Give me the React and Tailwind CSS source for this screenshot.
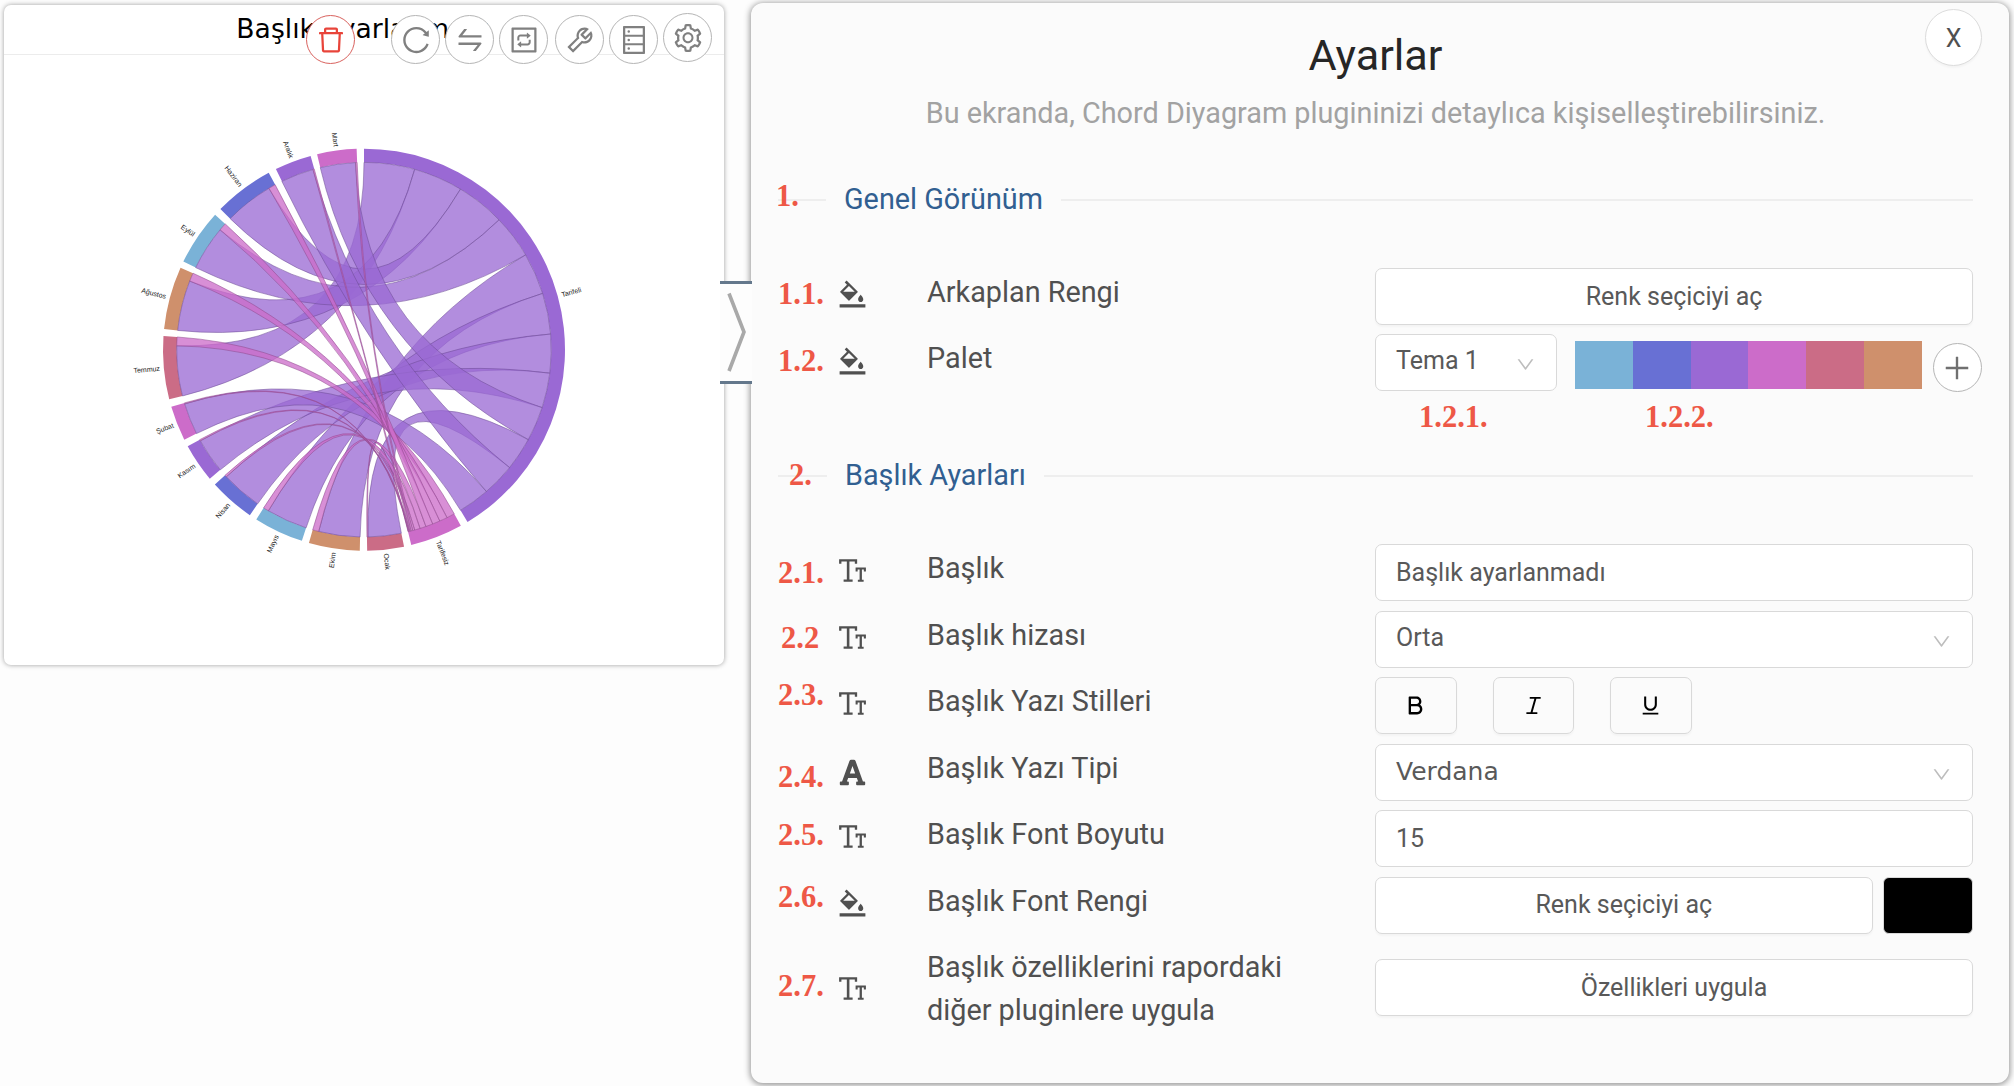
import React from "react";
import {
  AiOutlineDelete, AiOutlineReload, AiOutlineSwap, AiOutlineInteraction, AiOutlineTool,
  AiOutlineDatabase, AiOutlineSetting, AiOutlineBgColors, AiOutlineFontSize, AiOutlineDown,
  AiOutlinePlus, AiOutlineBold, AiOutlineItalic, AiOutlineUnderline,
} from "react-icons/ai";
import { FaFont } from "react-icons/fa";

const BLUE = "#7ab2d7", INDIGO = "#6870d4", PURPLE = "#9a69d4", PINK = "#cc6cc9", ROSE = "#cb6c86", ORANGE = "#cf906c";

/* name, colour, start, end (degrees clockwise from the top), split point between the two ribbons */
const MAIN = { name: "Tarifeli", color: PURPLE, a0: 0, a1: 149 };
const SECOND = { name: "Tarifesiz", color: PINK, a0: 151.2, a1: 166.4 };
const MONTHS = [
  { name: "Ocak", color: ROSE, a0: 168.5, split: 178.8, a1: 179.1, main: [118.7, 129], second: [166.25, 166.4] },
  { name: "Ekim", color: ORANGE, a0: 181.2, split: 194.0, a1: 195.9, main: [59.6, 72.5], second: [160.7, 162.6] },
  { name: "Mayıs", color: BLUE, a0: 198, split: 210.7, a1: 212.4, main: [72.5, 85.2], second: [162.6, 164.3] },
  { name: "Nisan", color: INDIGO, a0: 214.6, split: 227.3, a1: 227.9, main: [85.2, 97.2], second: [164.3, 164.9] },
  { name: "Kasım", color: PURPLE, a0: 230.1, split: 240.9, a1: 241.3, main: [97.2, 108], second: [165.75, 166.05] },
  { name: "Şubat", color: PINK, a0: 243.4, split: 253.2, a1: 253.5, main: [139.2, 149], second: [166.05, 166.25] },
  { name: "Temmuz", color: ROSE, a0: 255.7, split: 271.2, a1: 273.9, main: [0, 15.7], second: [151.2, 153.7] },
  { name: "Ağustos", color: ORANGE, a0: 275.9, split: 291.5, a1: 294.1, main: [15.7, 31], second: [153.7, 156.15] },
  { name: "Eylül", color: BLUE, a0: 296, split: 309.8, a1: 312.2, main: [46.1, 59.6], second: [156.15, 158.5] },
  { name: "Haziran", color: INDIGO, a0: 314.4, split: 329.5, a1: 331.7, main: [31, 46.1], second: [158.5, 160.7] },
  { name: "Aralık", color: PURPLE, a0: 334, split: 344.2, a1: 344.6, main: [129, 139.2], second: [165.4, 165.75] },
  { name: "Mart", color: PINK, a0: 346.5, split: 357.4, a1: 357.9, main: [108, 118.7], second: [164.9, 165.4] },
];

const R_OUT = 201, R_IN = 187.3;
const pt = (a, r) => {
  const t = ((a - 90) * Math.PI) / 180;
  return `${(r * Math.cos(t)).toFixed(2)},${(r * Math.sin(t)).toFixed(2)}`;
};
const band = (a0, a1) => {
  const big = a1 - a0 > 180 ? 1 : 0;
  return `M${pt(a0, R_OUT)}A${R_OUT},${R_OUT} 0 ${big} 1 ${pt(a1, R_OUT)}L${pt(a1, R_IN)}A${R_IN},${R_IN} 0 ${big} 0 ${pt(a0, R_IN)}Z`;
};
const ribbon = ([s0, s1], [t0, t1]) =>
  `M${pt(s0, R_IN)}A${R_IN},${R_IN} 0 0 1 ${pt(s1, R_IN)}Q0,0 ${pt(t0, R_IN)}A${R_IN},${R_IN} 0 0 1 ${pt(t1, R_IN)}Q0,0 ${pt(s0, R_IN)}Z`;

function ChordDiagram() {
  return (
    <svg className="block h-[609px] w-[720px]" viewBox="4 55 720 609">
      <g transform="translate(364 349.7)">
        {[MAIN, SECOND, ...MONTHS].map((g) => {
          const mid = (g.a0 + g.a1) / 2;
          const flip = mid > 180;
          return (
            <g key={g.name}>
              <path d={band(g.a0, g.a1)} fill={g.color} />
              <g transform={`rotate(${mid - 90}) translate(205 0)${flip ? " rotate(180)" : ""}`}>
                <text dy=".35em" textAnchor={flip ? "end" : "start"} className="fill-[#222] font-['Liberation_Sans',sans-serif] text-[7px]">{g.name}</text>
              </g>
            </g>
          );
        })}
        <g fillOpacity=".76" strokeOpacity=".7" strokeWidth=".75">
          {MONTHS.map((m) => (
            <path key={m.name} d={ribbon(m.main, [m.a0, m.split])} fill={PURPLE} stroke="#6c4a94" />
          ))}
          {MONTHS.map((m) => (
            <path key={m.name} d={ribbon(m.second, [m.split, m.a1])} fill={PINK} stroke="#8f4b8d" />
          ))}
        </g>
      </g>
    </svg>
  );
}

const TOOL = "flex size-[49px] shrink-0 items-center justify-center rounded-full border bg-white text-[32px] ";

function PreviewCard() {
  return (
    <section className="relative mt-[5px] ml-1 h-[660px] w-[720px] shrink-0 rounded-[7px] bg-white shadow-[0_0_5px_rgba(0,0,0,0.38)]">
      <h2 className="h-[50px] border-b-[1px] border-[#ececec] pr-[2px] text-center font-['DejaVu_Sans',sans-serif] text-[26.6px] leading-[48px] text-black">
        Başlık ayarlanmadı
      </h2>
      <div className="absolute top-2 left-[302px] flex items-start text-[#808080]">
        <button className={TOOL + "mt-[2px] mr-9 border-[#d9625e] text-[#e8443a]"}><AiOutlineDelete /></button>
        <button className={TOOL + "mt-[2px] mr-[5px] border-[#b5b5b5]"}><AiOutlineReload /></button>
        <button className={TOOL + "mt-[2px] mr-[5px] border-[#b5b5b5]"}><AiOutlineSwap /></button>
        <button className={TOOL + "mt-[2px] mr-[7px] border-[#b5b5b5]"}><AiOutlineInteraction /></button>
        <button className={TOOL + "mt-[2px] mr-[5px] border-[#b5b5b5]"}><AiOutlineTool /></button>
        <button className={TOOL + "mt-[2px] mr-[5px] border-[#b5b5b5]"}><AiOutlineDatabase /></button>
        <button className={TOOL + "border-[#b5b5b5]"}><AiOutlineSetting /></button>
      </div>
      <ChordDiagram />
    </section>
  );
}

function Mark({ className = "", children }) {
  return (
    <span className={"font-['Liberation_Serif',serif] text-[30.5px] leading-[30px] font-bold whitespace-nowrap text-[#ee5846] " + className}>
      {children}
    </span>
  );
}

function Section({ className, mark, markClass, lead, children }) {
  return (
    <div className={"relative flex h-[44px] items-center " + className}>
      <div className={"h-[2px] bg-[#eeeeee] " + lead} />
      <h3 className="mx-[18px] pb-[2px] text-[28.8px] leading-[42px] text-[#315f91]">{children}</h3>
      <div className="h-[2px] flex-1 bg-[#eeeeee]" />
      <Mark className={"absolute " + markClass}>{mark}</Mark>
    </div>
  );
}

function Row({ mark, markClass, icon, iconClass = "mt-[10px]", label, className = "h-[66.5px]", children }) {
  return (
    <div className={"grid grid-cols-[58px_91px_448px_1fr] items-start " + className}>
      <Mark className={markClass}>{mark}</Mark>
      <span className={"text-[33px] text-[#505050] " + iconClass}>{icon}</span>
      <span className="mt-[3px] text-[28.8px] leading-[43px] text-[#505050]">{label}</span>
      {children}
    </div>
  );
}

const BOX = "flex h-[57px] items-center rounded-[7px] border border-[#d9d9d9] text-[25px] text-[#595959] ";

function Select({ className, children }) {
  return (
    <div className={BOX + "justify-between bg-white pr-5 pl-[20px] " + className}>
      <span className="-mt-[3px]">{children}</span>
      <AiOutlineDown className="mt-[4px] text-[21px] text-[#bdbdbd]" />
    </div>
  );
}

const STYLE = BOX + "w-[81.500px] justify-center text-[25px] text-black shadow-[0_2px_2px_rgba(0,0,0,0.03)]";

function SettingsPanel() {
  return (
    <section className="relative mt-[3px] ml-[27px] h-[1080px] w-[1258px] shrink-0 rounded-[12px] bg-[#fbfbfb] pr-[36px] pl-[27px] font-['Roboto',sans-serif] shadow-[0_1px_6px_1px_rgba(0,0,0,0.42)]">
      <button className="absolute top-[6px] right-[27px] flex size-[57px] items-center justify-center rounded-full border border-[#dcdcdc] bg-white pt-[2px] text-[25px] text-[#505050] shadow-[0_2px_2px_rgba(0,0,0,0.03)]">
        X
      </button>
      <h1 className="pt-[28px] pr-1 pl-[4px] text-center text-[43.2px] leading-[49px] text-[#262626]">Ayarlar</h1>
      <p className="mt-[13px] text-center text-[28.8px] leading-[40px] text-[#a2a2a2]">
        Bu ekranda, Chord Diyagram plugininizi detaylıca kişiselleştirebilirsiniz.
      </p>

      <Section className="mt-[45px]" lead="w-[48px]" mark="1." markClass="-left-[2px] top-[3px]">Genel Görünüm</Section>

      <div className="mt-[46px]">
        <Row mark="1.1." markClass="mt-[11px]" icon={<AiOutlineBgColors />} label="Arkaplan Rengi" className="h-[66px]">
          <button className={BOX + "justify-center bg-white shadow-[0_2px_2px_rgba(0,0,0,0.03)]"}>Renk seçiciyi aç</button>
        </Row>
        <Row mark="1.2." markClass="mt-[12px]" icon={<AiOutlineBgColors />} iconClass="mt-[11px]" label="Palet" className="h-[67px]">
          <div className="-mr-2 flex items-start">
            <Select className="w-[182px]">Tema 1</Select>
            <div className="mt-[7px] ml-[18px] grid h-[48px] w-[347px] grid-cols-6">
              <i className="bg-[#7ab2d7]" />
              <i className="bg-[#6870d4]" />
              <i className="bg-[#9a69d4]" />
              <i className="bg-[#cc6cc9]" />
              <i className="bg-[#cb6c86]" />
              <i className="bg-[#cf906c]" />
            </div>
            <button className="mt-[9px] ml-[10.500px] flex size-[49px] items-center justify-center rounded-full border border-[#b5b5b5] bg-white text-[32px] text-[#707070]">
              <AiOutlinePlus />
            </button>
          </div>
        </Row>
        <div className="flex h-[30px] pt-[1px] pl-[641px]">
          <Mark className="w-[226px]">1.2.1.</Mark>
          <Mark>1.2.2.</Mark>
        </div>
      </div>

      <Section className="mt-[23px]" lead="w-[49px]" mark="2." markClass="left-[11px] top-[6px]">Başlık Ayarları</Section>

      <div className="mt-[46px]">
        <Row mark="2.1." markClass="mt-[14px]" icon={<AiOutlineFontSize />} label="Başlık">
          <div className={BOX + "bg-white pl-[20px]"}>Başlık ayarlanmadı</div>
        </Row>
        <Row mark="2.2" markClass="ml-[3px] mt-[12px]" icon={<AiOutlineFontSize />} label="Başlık hizası">
          <Select>Orta</Select>
        </Row>
        <Row mark="2.3." markClass="mt-[3px]" icon={<AiOutlineFontSize />} label="Başlık Yazı Stilleri">
          <div className="flex gap-[36px]">
            <button className={STYLE}><AiOutlineBold /></button>
            <button className={STYLE}><AiOutlineItalic /></button>
            <button className={STYLE}><AiOutlineUnderline /></button>
          </div>
        </Row>
        <Row mark="2.4." markClass="mt-[18px]" icon={<FaFont className="text-[29px]" />} iconClass="ml-[2px] mt-[14px]" label="Başlık Yazı Tipi">
          <Select><span className="relative top-[1px] font-['DejaVu_Sans',sans-serif]">Verdana</span></Select>
        </Row>
        <Row mark="2.5." markClass="mt-[10px]" icon={<AiOutlineFontSize />} label="Başlık Font Boyutu">
          <div className={BOX + "bg-white pl-[20px]"}>15</div>
        </Row>
        <Row mark="2.6." markClass="mt-[5px]" icon={<AiOutlineBgColors />} iconClass="mt-[10px]" label="Başlık Font Rengi">
          <div className="flex gap-[10px]">
            <button className={BOX + "flex-1 justify-center bg-white shadow-[0_2px_2px_rgba(0,0,0,0.03)]"}>Renk seçiciyi aç</button>
            <div className="h-[57px] w-[90.500px] rounded-[6px] border border-[#d9d9d9] bg-black" />
          </div>
        </Row>
        <Row
          mark="2.7."
          markClass="mt-[28px]"
          icon={<AiOutlineFontSize />}
          iconClass="mt-[29px]"
          label={<>Başlık özelliklerini rapordaki<br />diğer pluginlere uygula</>}
          className="h-[100px]"
        >
          <button className={BOX + "mt-[16px] justify-center bg-white shadow-[0_2px_2px_rgba(0,0,0,0.03)]"}>Özellikleri uygula</button>
        </Row>
      </div>

      {/* collapse handle on the panel's left edge */}
      <button className="absolute top-[278px] -left-[31px] flex h-[103px] w-8 justify-center border-y-[3px] border-[#64788c] bg-[#fdfdfd]">
        <svg className="h-[97px] w-[32px]" viewBox="0 0 32 97" fill="none">
          <path d="M9 9.500 24 48 9 87" stroke="#a9a9a9" strokeWidth="3.600" />
        </svg>
      </button>
    </section>
  );
}

export default function App() {
  return (
    <main className="flex h-[1086px] w-[2014px] items-start overflow-hidden bg-[#fdfdfd]">
      <PreviewCard />
      <SettingsPanel />
    </main>
  );
}
